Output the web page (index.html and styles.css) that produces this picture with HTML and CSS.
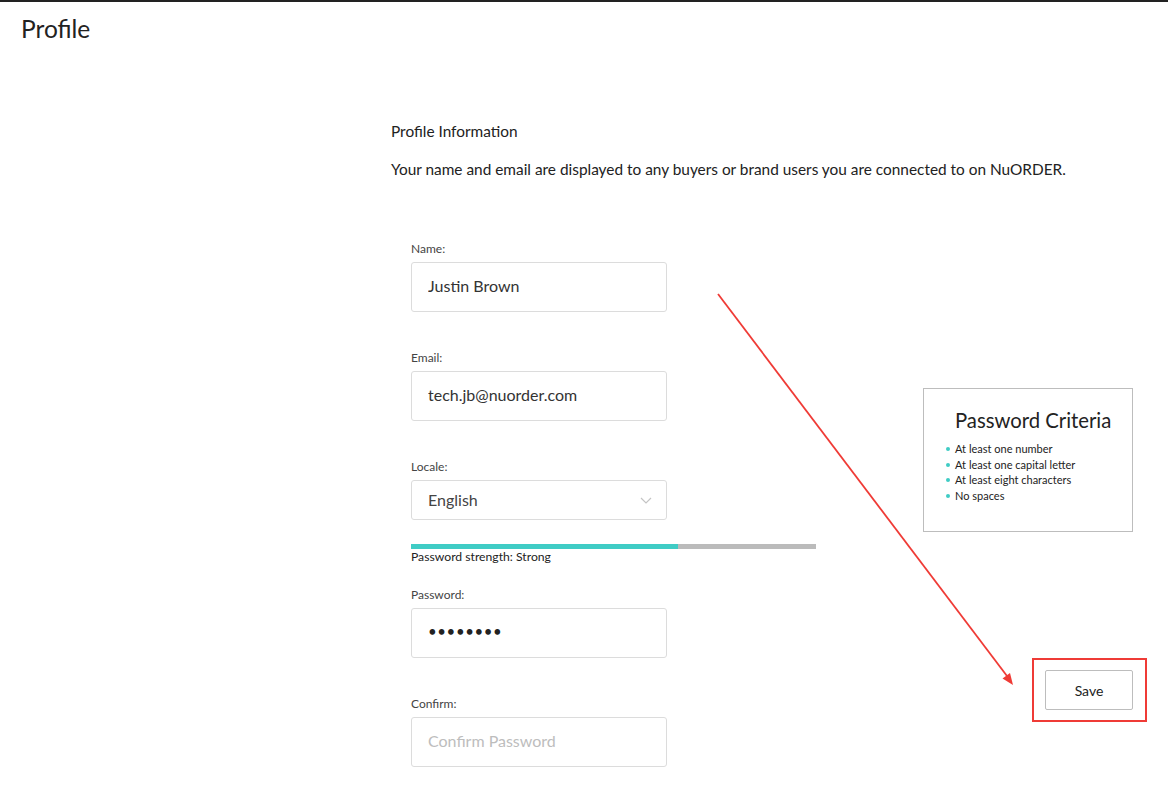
FILE: index.html
```html
<!DOCTYPE html>
<html lang="en">
<head>
    <meta charset="UTF-8">
    <title>Profile</title>
    <link rel="stylesheet" href="styles.css">
</head>
<body>
    <div class="page">
        <h1>Profile</h1>
        <div class="main">
            <div class="profile">
                <h2 class="section-title">Profile Information</h2>
                <p class="section-desc">Your name and email are displayed to any buyers or brand users you are connected to on NuORDER.</p>
                <form class="profile-form">
                    <!-- Name -->
                    <div class="field">
                        <label for="name">Name:</label>
                        <input type="text" id="name" value="Justin Brown">
                    </div>
                    <!-- Email -->
                    <div class="field">
                        <label for="email">Email:</label>
                        <input type="text" id="email" value="tech.jb@nuorder.com">
                    </div>
                    <!-- Locale -->
                    <div class="field field-locale">
                        <label for="locale">Locale:</label>
                        <div class="select-wrap">
                            <select id="locale">
                                <option>English</option>
                            </select>
                            <svg class="chevron" width="12" height="7" viewBox="0 0 12 7">
                                <path d="M1 1 L6 6 L11 1" fill="none" stroke="#c4c4c4" stroke-width="1.2"/>
                            </svg>
                        </div>
                    </div>
                    <!-- Strength meter -->
                    <div class="strength">
                        <div class="strength-bar"><div class="strength-fill" style="width: 66%"></div></div>
                        <div class="strength-text">Password strength: Strong</div>
                    </div>
                    <!-- Password -->
                    <div class="field">
                        <label for="password">Password:</label>
                        <input type="password" id="password" value="password" class="pw">
                    </div>
                    <!-- Confirm -->
                    <div class="field">
                        <label for="confirm">Confirm:</label>
                        <input type="password" id="confirm" placeholder="Confirm Password">
                    </div>
                </form>
            </div>
            <div class="aside">
                <div class="criteria">
                    <div class="criteria-title">Password Criteria</div>
                    <ul class="criteria-list">
                        <li>At least one number</li>
                        <li>At least one capital letter</li>
                        <li>At least eight characters</li>
                        <li>No spaces</li>
                    </ul>
                </div>
                <div class="save-highlight">
                    <button type="button" class="save-btn">Save</button>
                </div>
            </div>
        </div>
    </div>
    <!-- annotation arrow -->
    <svg class="annotation" width="1168" height="786" viewBox="0 0 1168 786">
        <line x1="718" y1="294" x2="1007" y2="676" stroke="#ef3b36" stroke-width="1.8"/>
        <polygon points="1013,685 1002.5,678.5 1010,673" fill="#ef3b36"/>
    </svg>
</body>
</html>
```

FILE: styles.css
```css
/* Profile page */
body {
    margin: 0;
    font-family: Lato, "Open Sans", sans-serif;
    color: #333;
    background: #fff;
}
.page {
    border-top: 2px solid #222;
}
h1 {
    margin: 12px 0 0 21px;
    font-size: 24.5px;
    line-height: 30px;
    font-weight: normal;
    color: #222;
}
.main {
    display: flex;
    padding: 79px 0 0 391px;
}
.profile {
    width: 532px;
}
.section-title {
    margin: 0 0 20px;
    font-size: 15.4px;
    line-height: 17px;
    font-weight: normal;
    color: #222;
}
.section-desc {
    margin: 0;
    font-size: 15.4px;
    line-height: 18px;
    color: #222;
    white-space: nowrap;
}
.profile-form {
    margin-top: 64px;
    padding-left: 20px;
}
.field {
    margin-bottom: 39px;
}
.field-locale {
    margin-bottom: 24px;
}
.field label {
    display: block;
    font-size: 12px;
    line-height: 14px;
    color: #444;
    margin-bottom: 6px;
}
.field input,
.field select {
    box-sizing: border-box;
    width: 256px;
    height: 50px;
    padding: 0 16px 4px;
    border: 1px solid #dcdcdc;
    border-radius: 3px;
    font-family: Lato, "Open Sans", sans-serif;
    font-size: 16px;
    color: #333;
    background: #fff;
    outline: none;
}
.field input::placeholder {
    color: #bdbdbd;
}
.field input.pw {
    font-size: 15px;
    letter-spacing: 0.6px;
    color: #222;
}
.select-wrap {
    position: relative;
    width: 256px;
}
.field select {
    height: 40px;
    padding-bottom: 2px;
    appearance: none;
    -webkit-appearance: none;
    color: #444;
}
.chevron {
    position: absolute;
    right: 15px;
    top: 17px;
}
.strength {
    width: 405px;
    margin-bottom: 24px;
}
.strength-bar {
    height: 5px;
    background: #bbbbbb;
}
.strength-fill {
    height: 100%;
    background: #3fccc5;
}
.strength-text {
    margin-top: 1px;
    font-size: 12.2px;
    line-height: 14px;
    color: #222;
}
.aside {
    margin-top: 265px;
    width: 224px;
}
.criteria {
    box-sizing: border-box;
    width: 210px;
    height: 144px;
    border: 1px solid #bdbdbd;
    padding: 18px 0 0 31px;
}
.criteria-title {
    font-size: 20.3px;
    line-height: 26px;
    color: #222;
}
.criteria-list {
    list-style: none;
    margin: 8px 0 0 -9px;
    padding: 0;
}
.criteria-list li {
    position: relative;
    padding-left: 9px;
    font-size: 11px;
    line-height: 15.5px;
    color: #222;
}
.criteria-list li::before {
    content: "";
    position: absolute;
    left: 0;
    top: 6px;
    width: 4px;
    height: 4px;
    border-radius: 50%;
    background: #3fccc5;
}
.save-highlight {
    width: 115px;
    height: 64px;
    box-sizing: border-box;
    margin: 126px 0 0 109px;
    border: 2px solid #ef3b36;
    padding: 10px 0 0 11px;
}
.save-btn {
    width: 88px;
    height: 40px;
    border: 1px solid #bdbdbd;
    border-radius: 2px;
    background: #fff;
    font-family: Lato, "Open Sans", sans-serif;
    font-size: 14px;
    color: #222;
    cursor: pointer;
}
.annotation {
    position: absolute;
    left: 0;
    top: 0;
    pointer-events: none;
}
```
